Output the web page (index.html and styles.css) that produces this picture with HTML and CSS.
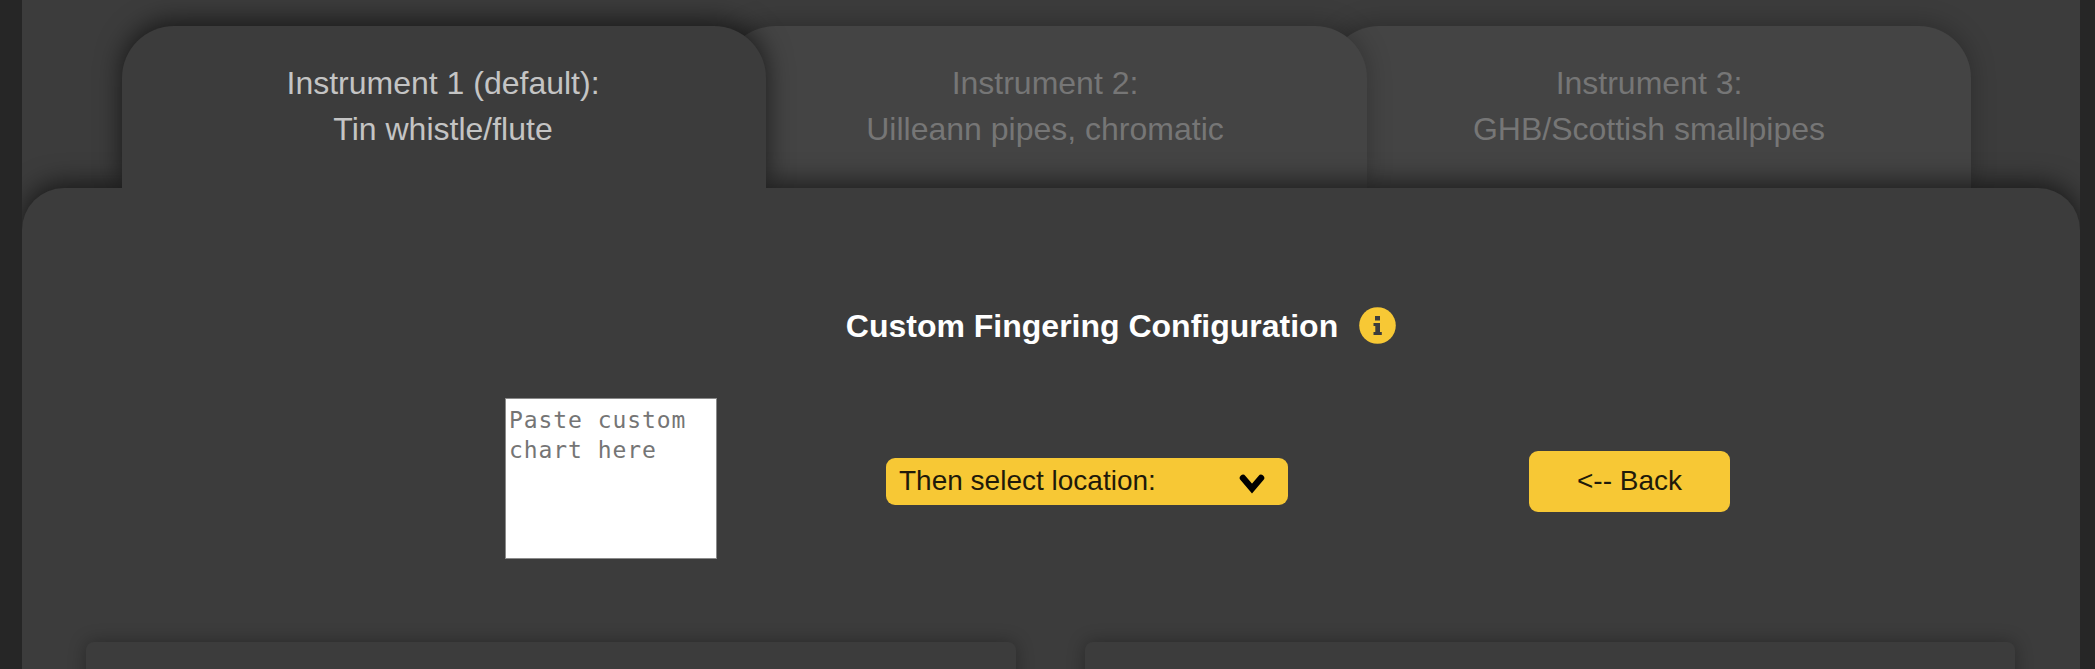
FILE: index.html
```html
<!DOCTYPE html>
<html lang="en">
<head>
<meta charset="utf-8">
<title>Custom Fingering Configuration</title>
<link rel="stylesheet" href="styles.css">
</head>
<body>
<main class="page">
  <nav class="tabs">
    <div class="tab tab-active">Instrument 1 (default):<br>Tin whistle/flute</div>
    <div class="tab tab-second">Instrument 2:<br>Uilleann pipes, chromatic</div>
    <div class="tab tab-third">Instrument 3:<br>GHB/Scottish smallpipes</div>
  </nav>
  <section class="panel">
    <h2 class="heading">Custom Fingering Configuration
      <svg class="info" viewBox="0 0 37 37"><circle cx="18.5" cy="18.5" r="18.3" fill="#f7c835"/><path d="M16 9h5v4.500h-5zM14.500 16H21v9h1.800v3h-8.300v-3h1.800v-6h-1.800z" fill="#3c3c3c"/></svg>
    </h2>
    <div class="controls">
      <textarea class="chart" placeholder="Paste custom chart here"></textarea>
      <div class="select">Then select location:
        <svg class="chevron" viewBox="0 0 26 21"><path d="M4 5l9 10.500L22 5" fill="none" stroke="#000" stroke-width="6.500" stroke-linecap="round"/></svg>
      </div>
      <button class="back">&lt;-- Back</button>
    </div>
    <div class="cards">
      <div class="card"></div>
      <div class="card"></div>
    </div>
  </section>
</main>
</body>
</html>
```
FILE: styles.css
```css
* { box-sizing: border-box; }
body {
  margin: 0;
  height: 669px;
  overflow: hidden;
  background: #262626;
  font-family: "Liberation Sans", Arial, sans-serif;
}
.page {
  height: 669px;
  margin: 0 15px 0 22px;
  padding-top: 26px;
  background: #3c3c3c;
  overflow: hidden;
}
.tabs {
  display: flex;
  height: 162px;
  padding-left: 100px;
}
.tab {
  position: relative;
  flex: none;
  width: 644px;
  height: 162px;
  padding-top: 34px;
  border-radius: 52px 52px 0 0;
  background: #444;
  color: #767676;
  box-shadow: 0 -3px 24px rgba(0, 0, 0, 0.25);
  font-size: 32px;
  line-height: 46px;
  text-align: center;
}
.tab-active {
  z-index: 5;
  padding-right: 2px;
  background: #3c3c3c;
  color: #c4c4c4;
  box-shadow: 0 -5px 26px rgba(0, 0, 0, 0.6);
  clip-path: inset(-40px -40px 0 -40px);
}
.tab-second { z-index: 2; margin-left: -43px; }
.tab-third { z-index: 1; margin-left: -40px; }
.panel {
  position: relative;
  z-index: 4;
  height: 520px;
  padding: 115px 64px 0 64px;
  border-radius: 42px 42px 0 0;
  background: #3c3c3c;
  box-shadow: 0 -5px 26px rgba(0, 0, 0, 0.6);
}
.heading {
  display: flex;
  align-items: center;
  justify-content: center;
  gap: 21px;
  height: 46px;
  margin: 0;
  padding-left: 140px;
  color: #fff;
  font-size: 32px;
  line-height: 46px;
}
.info { width: 37px; height: 37px; margin-top: -2px; }
.controls {
  display: flex;
  align-items: center;
  height: 161px;
  margin-top: 49px;
  padding-left: 419px;
}
.chart {
  width: 212px;
  height: 161px;
  margin: 0;
  padding: 6px 3px;
  border: 1px solid #8a8a8a;
  border-radius: 0;
  background: #fff;
  resize: none;
  overflow: hidden;
  font-family: "DejaVu Sans Mono", monospace;
  font-size: 23px;
  letter-spacing: 0.93px;
  line-height: 30px;
}
.chart::placeholder { color: #757575; }
.select {
  display: flex;
  align-items: center;
  justify-content: space-between;
  width: 402px;
  height: 47px;
  margin: 5px 0 0 169px;
  padding: 0 23px 0 13px;
  border-radius: 9px;
  background: #f7c835;
  color: #1f1a0a;
  font-size: 28px;
}
.chevron { width: 26px; height: 21px; margin-top: 5px; }
.back {
  width: 201px;
  height: 61px;
  margin: 5px 0 0 241px;
  padding: 0;
  border: 0;
  border-radius: 9px;
  background: #f7c835;
  color: #1f1a0a;
  font-family: inherit;
  font-size: 28px;
}
.cards {
  display: grid;
  grid-template-columns: 930px 930px;
  column-gap: 69px;
  margin-top: 83px;
}
.card {
  height: 200px;
  border-radius: 8px;
  background: #3c3c3c;
  box-shadow: 0 0 18px rgba(0, 0, 0, 0.32);
}
```
